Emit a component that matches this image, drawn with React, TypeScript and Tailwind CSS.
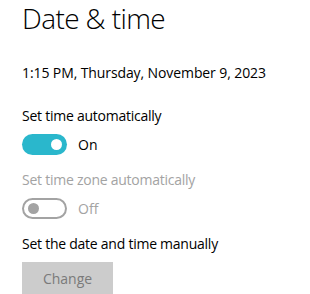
const font = { fontFamily: '"Open Sans", "Noto Sans", sans-serif' };

function Toggle({ on, disabled }: { on: boolean; disabled?: boolean }) {
  if (on) {
    return (
      <div className="flex h-[21px] w-[45px] items-center justify-end rounded-full bg-[#2ab7cc] px-[5px]">
        <div className="size-[11px] rounded-full bg-white" />
      </div>
    );
  }
  return (
    <div
      className={`flex h-[21px] w-[45px] items-center rounded-full border-2 px-[4px] ${
        disabled ? "border-[#a3a3a3]" : "border-[#333]"
      }`}
    >
      <div className={`size-[11px] rounded-full ${disabled ? "bg-[#a3a3a3]" : "bg-[#333]"}`} />
    </div>
  );
}

function ToggleRow({ label, on, disabled }: { label: string; on: boolean; disabled?: boolean }) {
  const tone = disabled ? "text-[#a3a3a3]" : "text-black";
  return (
    <div className="flex flex-col">
      <div className={`text-[14px] leading-[20px] tracking-[-0.25px] ${tone}`}>{label}</div>
      <div className="mt-[8px] flex items-center gap-[11px]">
        <Toggle on={on} disabled={disabled} />
        <span className={`text-[14px] leading-[20px] ${tone}`}>{on ? "On" : "Off"}</span>
      </div>
    </div>
  );
}

export default function App() {
  return (
    <div className="h-[294px] w-[310px] overflow-hidden bg-white px-[22px]" style={font}>
      <h1 className="text-[28px] font-light leading-[36px] tracking-[-0.6px] text-black">Date &amp; time</h1>
      <div className="mt-[27px] text-[14px] leading-[20px] tracking-[-0.1px] text-black">
        1:15 PM, Thursday, November 9, 2023
      </div>
      <div className="mt-[23px] flex flex-col gap-[15px]">
        <ToggleRow label="Set time automatically" on />
        <ToggleRow label="Set time zone automatically" on={false} disabled />
      </div>
      <div className="mt-[15px] text-[14px] leading-[20px] tracking-[-0.25px] text-black">
        Set the date and time manually
      </div>
      <button className="mt-[8px] h-[32px] w-[91px] bg-[#cccccc] text-[14px] text-[#7a7a7a]">Change</button>
    </div>
  );
}
